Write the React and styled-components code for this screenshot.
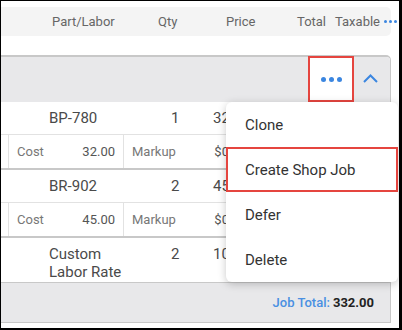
import React from "react";
import styled, { createGlobalStyle } from "styled-components";

const Global = createGlobalStyle`
  html, body { margin: 0; padding: 0; background: #fff; }
  body { font-family: Roboto, "Liberation Sans", Arial, sans-serif; }
  * { box-sizing: border-box; }
`;

const BLUE = "#3b86e0";
const RED = "#e5453f";

const Frame = styled.div`
  position: relative;
  width: 402px;
  height: 330px;
  border-style: solid;
  border-color: #000;
  border-width: 1px 3px 2px 1px;
  background: #fff;
  overflow: hidden;
  padding: 6px 8px 0 0;
  display: flex;
  flex-direction: column;
`;

const HeaderBar = styled.div`
  height: 29px;
  background: #f4f4f4;
  border-radius: 0 5px 5px 0;
  display: grid;
  grid-template-columns: 51px 106px 68px 71px 38px 1fr;
  align-items: center;
  font-size: 13px;
  color: #666;
`;

const HeadCell = styled.span`
  white-space: nowrap;
  display: flex;
  align-items: center;
  gap: 4px;
`;

const DotGroup = styled.span`
  display: flex;
  gap: ${(p) => p.$gap}px;
`;

const Card = styled.div`
  margin-top: 19px;
  border-top: 2px solid #c8c8c8;
  border-right: 1px solid #c8c8c8;
  border-top-right-radius: 5px;
  display: flex;
  flex-direction: column;
`;

const CardHeader = styled.div`
  height: 45px;
  background: #e8e8ea;
  border-top-right-radius: 4px;
  display: flex;
  align-items: stretch;
  justify-content: flex-end;
  padding-right: 4px;
`;

const MoreButton = styled.div`
  width: 46px;
  margin-top: -1px;
  background: #fff;
  border: 2px solid ${RED};
  display: flex;
  align-items: center;
  justify-content: center;
`;

const Dot = styled.span`
  width: ${(p) => p.$size}px;
  height: ${(p) => p.$size}px;
  border-radius: 50%;
  background: ${BLUE};
`;

const ChevronBox = styled.div`
  width: 32px;
  display: flex;
  align-items: center;
  justify-content: center;
  padding-bottom: 2px;
`;

const ItemRow = styled.div`
  display: grid;
  grid-template-columns: 48px 111px 53px 1fr;
  align-items: ${(p) => (p.$tall ? "start" : "center")};
  height: ${(p) => p.$h}px;
  padding-top: ${(p) => (p.$tall ? 7 : 0)}px;
  border-bottom: ${(p) => (p.$last ? "1px solid #c8c8c8" : "1px solid #e2e2e2")};
  font-size: 15px;
  line-height: 18px;
  color: #4a4a4a;
`;

const Cell = styled.span`
  white-space: ${(p) => (p.$wrap ? "normal" : "nowrap")};
  padding-left: ${(p) => p.$pl || 0}px;
`;

const SubRow = styled.div`
  display: grid;
  grid-template-columns: 7px 115px 132px;
  height: 35px;
  border-bottom: 2px solid #c8c8c8;
  font-size: 13px;
  color: #777;
`;

const SubCell = styled.div`
  display: flex;
  align-items: center;
  justify-content: space-between;
  padding: 0 8px;
  border-left: 1px solid #e2e2e2;
`;

const SubValue = styled.span`
  color: #555;
`;

const Footer = styled.div`
  height: 40px;
  background: #e8e8ea;
  border-bottom: 1px solid #c8c8c8;
  display: flex;
  align-items: center;
  justify-content: flex-end;
  padding: 0 16px 0 0;
  font-size: 13px;
  font-weight: 500;
  gap: 3px;
`;

const TotalLabel = styled.span`
  color: #4a90e2;
`;

const TotalValue = styled.span`
  color: #222;
  font-weight: 700;
`;

const Menu = styled.div`
  position: absolute;
  left: 225px;
  top: 101px;
  width: 172px;
  background: #fff;
  border-radius: 6px;
  box-shadow: 0 2px 8px rgba(0, 0, 0, 0.22);
  display: flex;
  flex-direction: column;
`;

const MenuItem = styled.div`
  height: 45px;
  display: flex;
  align-items: center;
  padding-left: ${(p) => (p.$hl ? 17 : 19)}px;
  font-size: 15px;
  color: #333;
  border: ${(p) => (p.$hl ? `2px solid ${RED}` : "none")};
`;

const rows = [
  { part: "BP-780", qty: "1", price: "32.00", cost: "32.00" },
  { part: "BR-902", qty: "2", price: "45.00", cost: "45.00" },
];

export default function App() {
  return (
    <>
      <Global />
      <Frame>
        <HeaderBar>
          <span />
          <HeadCell>Part/Labor</HeadCell>
          <HeadCell>Qty</HeadCell>
          <HeadCell>Price</HeadCell>
          <HeadCell>Total</HeadCell>
          <HeadCell>
            Taxable
            <DotGroup $gap={2}>
              <Dot $size={3} />
              <Dot $size={3} />
              <Dot $size={3} />
            </DotGroup>
          </HeadCell>
        </HeaderBar>
        <Card>
          <CardHeader>
            <MoreButton>
              <DotGroup $gap={3}>
                <Dot $size={5} />
                <Dot $size={5} />
                <Dot $size={5} />
              </DotGroup>
            </MoreButton>
            <ChevronBox>
              <svg width="15" height="9" viewBox="0 0 15 9" fill="none">
                <polyline points="1,8 7.5,1.5 14,8" stroke={BLUE} strokeWidth="2" />
              </svg>
            </ChevronBox>
          </CardHeader>
          {rows.map((r) => (
            <React.Fragment key={r.part}>
              <ItemRow $h={33}>
                <span />
                <Cell>{r.part}</Cell>
                <Cell $pl={11}>{r.qty}</Cell>
                <Cell>{r.price}</Cell>
              </ItemRow>
              <SubRow>
                <span />
                <SubCell>
                  <span>Cost</span>
                  <SubValue>{r.cost}</SubValue>
                </SubCell>
                <SubCell>
                  <span>Markup</span>
                  <SubValue>$0.00</SubValue>
                </SubCell>
              </SubRow>
            </React.Fragment>
          ))}
          <ItemRow $h={45} $tall $last>
            <span />
            <Cell $wrap>Custom<br />Labor Rate</Cell>
            <Cell $pl={11}>2</Cell>
            <Cell>105.00</Cell>
          </ItemRow>
          <Footer>
            <TotalLabel>Job Total:</TotalLabel>
            <TotalValue>332.00</TotalValue>
          </Footer>
        </Card>
        <Menu>
          <MenuItem>Clone</MenuItem>
          <MenuItem $hl>Create Shop Job</MenuItem>
          <MenuItem>Defer</MenuItem>
          <MenuItem>Delete</MenuItem>
        </Menu>
      </Frame>
    </>
  );
}
